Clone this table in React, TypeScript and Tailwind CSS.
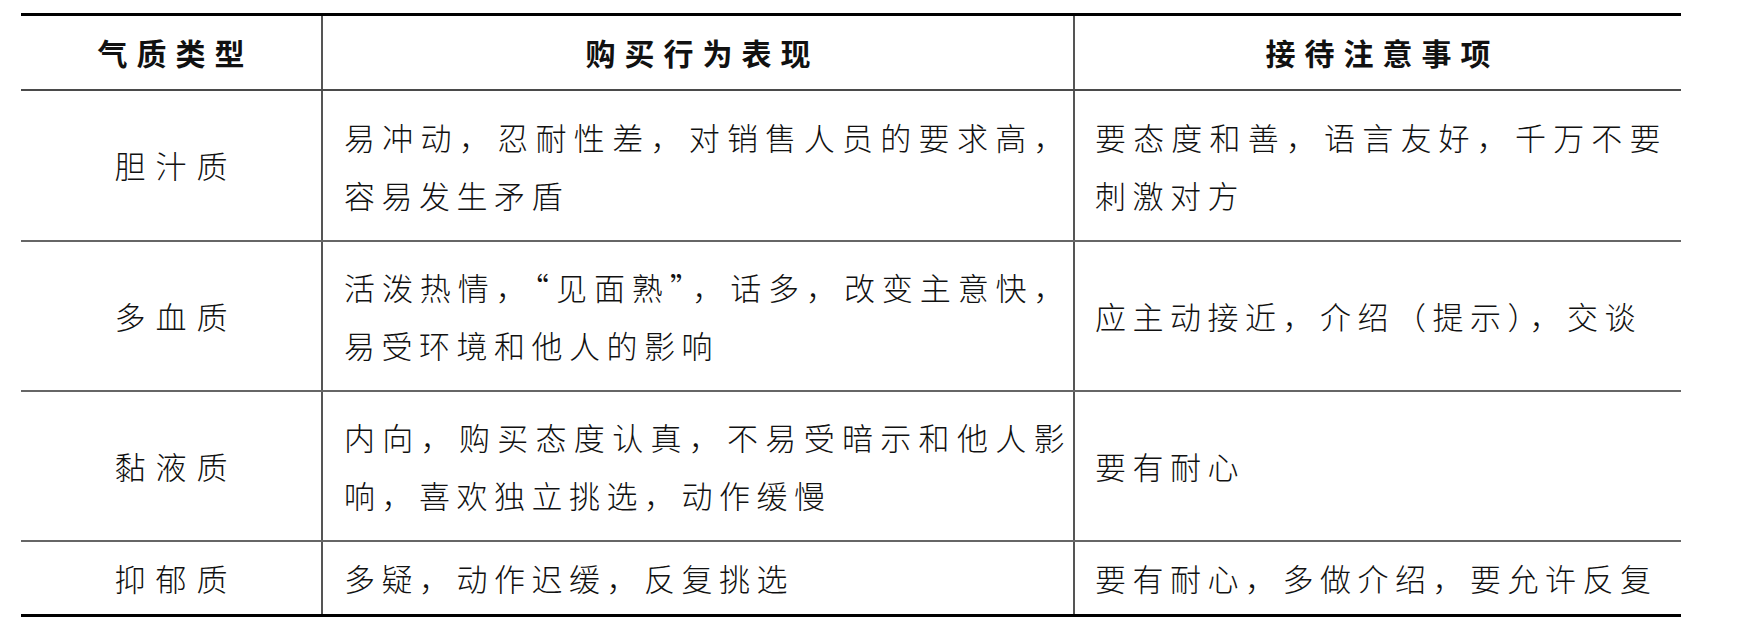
import React from "react";

/**
 * 气质类型与接待注意事项对照表
 */

interface Row {
  type: string;
  behavior: string[];
  notes: string[];
  height: string;
}

const rows: Row[] = [
  {
    type: "胆汁质",
    behavior: ["易冲动，忍耐性差，对销售人员的要求高，", "容易发生矛盾"],
    notes: ["要态度和善，语言友好，千万不要", "刺激对方"],
    height: "h-[151px]",
  },
  {
    type: "多血质",
    behavior: ["活泼热情，“见面熟”，话多，改变主意快，", "易受环境和他人的影响"],
    notes: ["应主动接近，介绍（提示），交谈"],
    height: "h-[150px]",
  },
  {
    type: "黏液质",
    behavior: ["内向，购买态度认真，不易受暗示和他人影", "响，喜欢独立挑选，动作缓慢"],
    notes: ["要有耐心"],
    height: "h-[150px]",
  },
  {
    type: "抑郁质",
    behavior: ["多疑，动作迟缓，反复挑选"],
    notes: ["要有耐心，多做介绍，要允许反复"],
    height: "h-[72px]",
  },
];

const body =
  "text-[31px] leading-[58px] tracking-[6.5px] text-[#111] font-light whitespace-nowrap";

// first line of a wrapped paragraph runs to the right edge, like the printed table
function Lines({ lines, width }: { lines: string[]; width: string }) {
  return (
    <>
      {lines.map((line, i) => (
        <div
          key={line}
          className={
            body +
            (lines.length > 1 && i === 0
              ? " " + width + " text-justify [text-align-last:justify]"
              : "")
          }
        >
          {line}
        </div>
      ))}
    </>
  );
}

export default function App() {
  return (
    <div
      className="w-[1764px] h-[636px] bg-white pt-[13px] pl-[21px]"
      style={{ fontFamily: '"Noto Sans CJK SC", "Noto Sans", sans-serif' }}
    >
      <div className="w-[1660px] border-t-[3px] border-b-[3px] border-black">
        {/* header */}
        <div className="grid grid-cols-[302px_752px_606px] h-[75px] border-b-2 border-[#4a4a4a]">
          <div className="flex items-center justify-center border-r-2 border-[#555] pl-[9px] text-[30px] font-bold tracking-[9px] text-[#111]">
            气质类型
          </div>
          <div className="flex items-center justify-center border-r-2 border-[#555] pl-[9px] text-[30px] font-bold tracking-[9px] text-[#111]">
            购买行为表现
          </div>
          <div className="flex items-center justify-center pl-[9px] text-[30px] font-bold tracking-[9px] text-[#111]">
            接待注意事项
          </div>
        </div>

        {rows.map((r, i) => (
          <div
            key={r.type}
            className={
              "grid grid-cols-[302px_752px_606px] " +
              r.height +
              (i < rows.length - 1 ? " border-b-2 border-[#666]" : "")
            }
          >
            <div className="flex items-center justify-center border-r-2 border-[#555] pl-[10px] text-[31px] tracking-[10px] text-[#111] font-light">
              {r.type}
            </div>
            <div className="flex flex-col justify-center border-r-2 border-[#555] pl-[21px]">
              <Lines lines={r.behavior} width="w-[727px]" />
            </div>
            <div className="flex flex-col justify-center pl-[20px]">
              <Lines lines={r.notes} width="w-[572px]" />
            </div>
          </div>
        ))}
      </div>
    </div>
  );
}
